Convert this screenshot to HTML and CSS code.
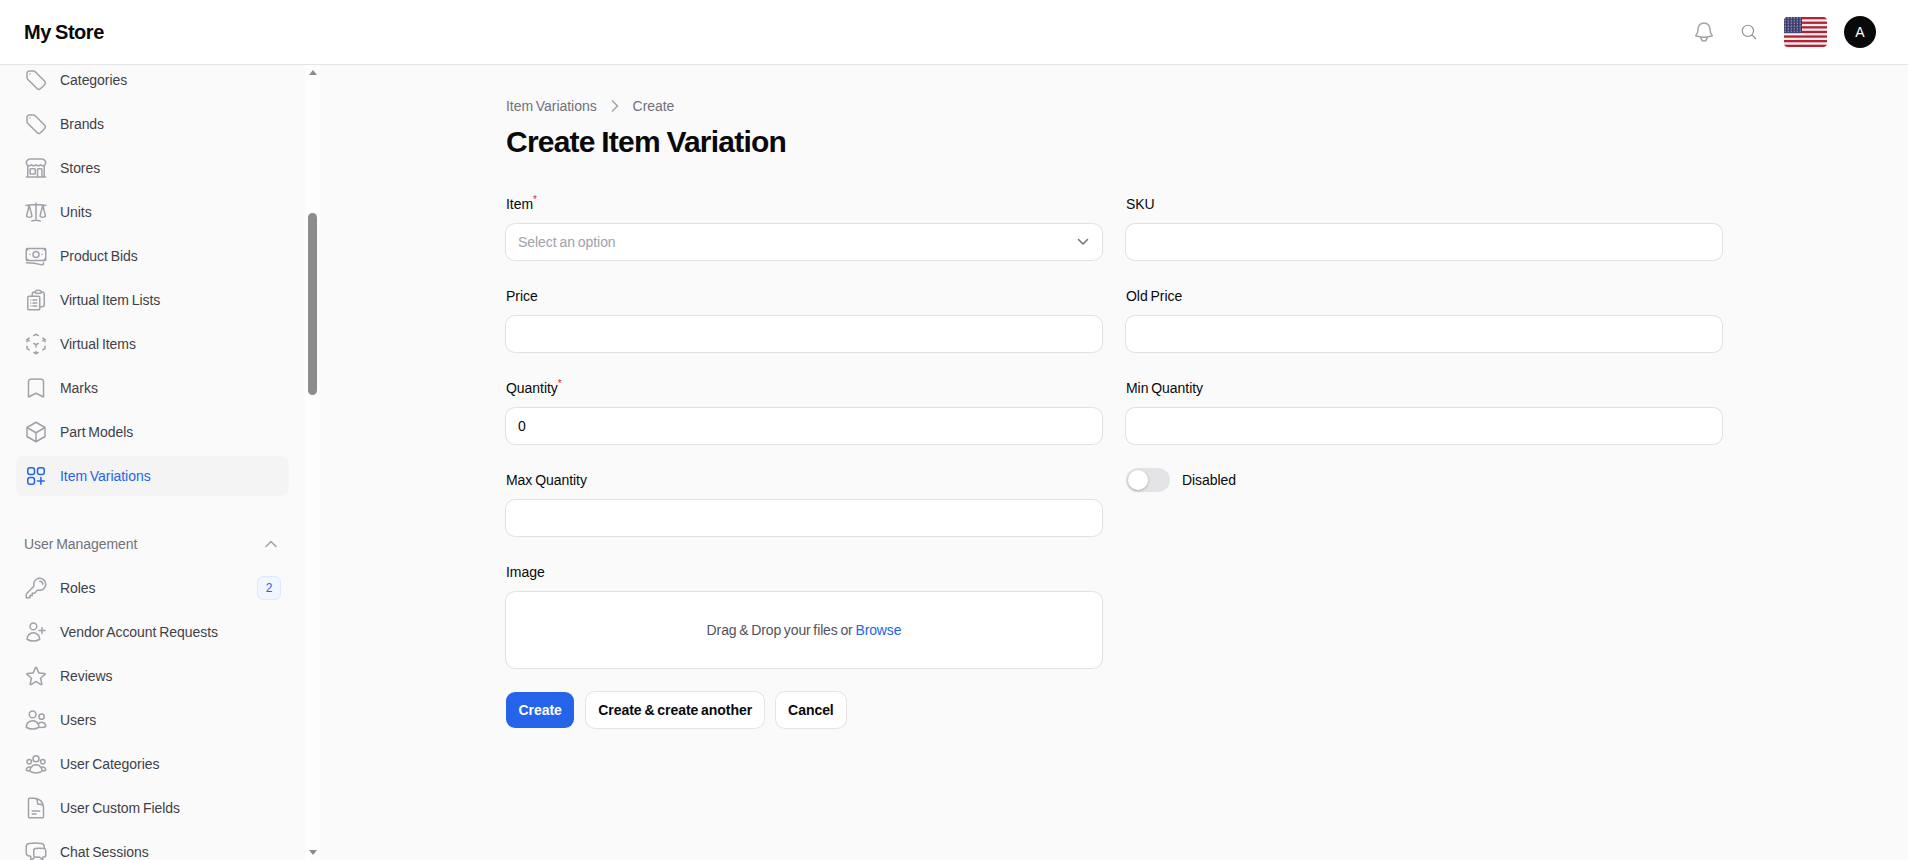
FILE: index.html
```html
<!DOCTYPE html>
<html lang="en">
<head>
<meta charset="utf-8">
<title>Create Item Variation</title>
<link rel="stylesheet" href="styles.css">
</head>
<body>
<svg class="sprite" aria-hidden="true">
<symbol id="i-tag" viewBox="0 0 24 24"><path d="M9.568 3H5.25A2.25 2.25 0 0 0 3 5.25v4.318c0 .597.237 1.17.659 1.591l9.581 9.581c.699.699 1.78.872 2.607.33a18.095 18.095 0 0 0 5.223-5.223c.542-.827.369-1.908-.33-2.607L11.16 3.66A2.25 2.25 0 0 0 9.568 3Z"/><path d="M6 6h.008v.008H6V6Z"/></symbol>
<symbol id="i-store" viewBox="0 0 24 24"><path d="M13.5 21v-7.5a.75.75 0 0 1 .75-.75h3a.75.75 0 0 1 .75.75V21m-4.5 0H2.36m11.14 0H18m0 0h3.64m-1.39 0V9.349M3.75 21V9.349m0 0a3.004 3.004 0 0 0 3.75-.615A2.993 2.993 0 0 0 9.75 9.75c.896 0 1.7-.393 2.25-1.016a2.993 2.993 0 0 0 2.25 1.016c.896 0 1.7-.393 2.25-1.016a3.001 3.001 0 0 0 3.75.614m-16.5 0a3.004 3.004 0 0 1-.621-4.72l1.189-1.19A1.5 1.5 0 0 1 5.378 3h13.243a1.5 1.5 0 0 1 1.06.44l1.19 1.189a3 3 0 0 1-.621 4.72M6.75 18h3.75a.75.75 0 0 0 .75-.75V13.5a.75.75 0 0 0-.75-.75H6.75a.75.75 0 0 0-.75.75v3.75c0 .414.336.75.75.75Z"/></symbol>
<symbol id="i-scale" viewBox="0 0 24 24"><path d="M12 3v17.25m0 0c-1.472 0-2.882.265-4.185.75M12 20.25c1.472 0 2.882.265 4.185.75M18.75 4.97A48.416 48.416 0 0 0 12 4.5c-2.291 0-4.545.16-6.75.47m13.5 0c1.01.143 2.01.317 3 .52m-3-.52 2.62 10.726c.122.499-.106 1.028-.589 1.202a5.988 5.988 0 0 1-2.031.352 5.988 5.988 0 0 1-2.031-.352c-.483-.174-.711-.703-.59-1.202L18.75 4.971Zm-16.5.52c.99-.203 1.99-.377 3-.52m0 0 2.62 10.726c.122.499-.106 1.028-.589 1.202a5.989 5.989 0 0 1-2.031.352 5.989 5.989 0 0 1-2.031-.352c-.483-.174-.711-.703-.59-1.202L5.25 4.971Z"/></symbol>
<symbol id="i-bank" viewBox="0 0 24 24"><path d="M2.25 18.75a60.07 60.07 0 0 1 15.797 2.101c.727.198 1.453-.342 1.453-1.096V18.75M3.75 4.5v.75A.75.75 0 0 1 3 6h-.75m0 0v-.375c0-.621.504-1.125 1.125-1.125H20.25M2.25 6v9m18-10.5v.75c0 .414.336.75.75.75h.75m-1.5-1.5h.375c.621 0 1.125.504 1.125 1.125v9.75c0 .621-.504 1.125-1.125 1.125h-.375m1.5-1.5H21a.75.75 0 0 0-.75.75v.75m0 0H3.75m0 0h-.375a1.125 1.125 0 0 1-1.125-1.125V15m1.5 1.5v-.75A.75.75 0 0 0 3 15h-.75M15 10.5a3 3 0 1 1-6 0 3 3 0 0 1 6 0Zm3 0h.008v.008H18V10.5Zm-12 0h.008v.008H6V10.5Z"/></symbol>
<symbol id="i-clip" viewBox="0 0 24 24"><path d="M9 12h3.75M9 15h3.75M9 18h3.75m3 .75H18a2.25 2.25 0 0 0 2.25-2.25V6.108c0-1.135-.845-2.098-1.976-2.192a48.424 48.424 0 0 0-1.123-.08m-5.801 0c-.065.21-.1.433-.1.664 0 .414.336.75.75.75h4.5a.75.75 0 0 0 .75-.75 2.25 2.25 0 0 0-.1-.664m-5.8 0A2.251 2.251 0 0 1 13.5 2.25H15c1.012 0 1.867.668 2.15 1.586m-5.8 0c-.376.023-.75.05-1.124.08C9.095 4.01 8.25 4.973 8.25 6.108V8.25m0 0H4.875c-.621 0-1.125.504-1.125 1.125v11.25c0 .621.504 1.125 1.125 1.125h9.75c.621 0 1.125-.504 1.125-1.125V9.375c0-.621-.504-1.125-1.125-1.125H8.25ZM6.75 12h.008v.008H6.75V12Zm0 3h.008v.008H6.75V15Zm0 3h.008v.008H6.75V18Z"/></symbol>
<symbol id="i-cubet" viewBox="0 0 24 24"><path d="m21 7.5-2.25-1.313M21 7.5v2.25m0-2.25-2.25 1.313M3 7.5l2.25-1.313M3 7.5l2.25 1.313M3 7.5v2.25m9 3 2.25-1.313M12 12.75l-2.25-1.313M12 12.75V15m0 6.75 2.25-1.313M12 21.75V19.5m0 2.25-2.25-1.313m0-16.875L12 2.25l2.25 1.313M21 14.25v2.25l-2.25 1.313m-13.5 0L3 16.5v-2.25"/></symbol>
<symbol id="i-mark" viewBox="0 0 24 24"><path d="M17.593 3.322c1.1.128 1.907 1.077 1.907 2.185V21L12 17.25 4.5 21V5.507c0-1.108.806-2.057 1.907-2.185a48.507 48.507 0 0 1 11.186 0Z"/></symbol>
<symbol id="i-cube" viewBox="0 0 24 24"><path d="m21 7.5-9-5.25L3 7.5m18 0-9 5.25m9-5.25v9l-9 5.25M3 7.5l9 5.25M3 7.5v9l9 5.25m0-9v9"/></symbol>
<symbol id="i-squares" viewBox="0 0 24 24"><path d="M13.5 16.875h3.375m0 0h3.375m-3.375 0V13.5m0 3.375v3.375M6 10.5h2.25a2.25 2.25 0 0 0 2.25-2.25V6a2.25 2.25 0 0 0-2.25-2.25H6A2.25 2.25 0 0 0 3.75 6v2.25A2.25 2.25 0 0 0 6 10.5Zm0 9.75h2.25A2.25 2.25 0 0 0 10.5 18v-2.25a2.25 2.25 0 0 0-2.25-2.25H6a2.25 2.25 0 0 0-2.25 2.25V18A2.25 2.25 0 0 0 6 20.25Zm9.75-9.75H18a2.25 2.25 0 0 0 2.25-2.25V6A2.25 2.25 0 0 0 18 3.75h-2.25A2.25 2.25 0 0 0 13.5 6v2.25a2.25 2.25 0 0 0 2.25 2.25Z"/></symbol>
<symbol id="i-key" viewBox="0 0 24 24"><path d="M15.75 5.25a3 3 0 0 1 3 3m3 0a6 6 0 0 1-7.029 5.912c-.563-.097-1.159.026-1.563.43L10.5 17.25H8.25v2.25H6v2.25H2.25v-2.818c0-.597.237-1.17.659-1.591l6.499-6.499c.404-.404.527-1 .43-1.563A6 6 0 1 1 21.75 8.25Z"/></symbol>
<symbol id="i-uplus" viewBox="0 0 24 24"><path d="M18 7.5v3m0 0v3m0-3h3m-3 0h-3m-2.25-4.125a3.375 3.375 0 1 1-6.75 0 3.375 3.375 0 0 1 6.75 0ZM3 19.235v-.11a6.375 6.375 0 0 1 12.75 0v.109A12.318 12.318 0 0 1 9.374 21c-2.331 0-4.512-.645-6.374-1.766Z"/></symbol>
<symbol id="i-star" viewBox="0 0 24 24"><path d="M11.48 3.499a.562.562 0 0 1 1.04 0l2.125 5.111a.563.563 0 0 0 .475.345l5.518.442c.499.04.701.663.321.988l-4.204 3.602a.563.563 0 0 0-.182.557l1.285 5.385a.562.562 0 0 1-.84.61l-4.725-2.885a.562.562 0 0 0-.586 0L6.982 20.54a.562.562 0 0 1-.84-.61l1.285-5.386a.562.562 0 0 0-.182-.557l-4.204-3.602a.562.562 0 0 1 .321-.988l5.518-.442a.563.563 0 0 0 .475-.345L11.48 3.5Z"/></symbol>
<symbol id="i-users" viewBox="0 0 24 24"><path d="M15 19.128a9.38 9.38 0 0 0 2.625.372 9.337 9.337 0 0 0 4.121-.952 4.125 4.125 0 0 0-7.533-2.493M15 19.128v-.003c0-1.113-.285-2.16-.786-3.07M15 19.128v.106A12.318 12.318 0 0 1 8.624 21c-2.331 0-4.512-.645-6.374-1.766l-.001-.109a6.375 6.375 0 0 1 11.964-3.07M12 6.375a3.375 3.375 0 1 1-6.75 0 3.375 3.375 0 0 1 6.75 0Zm8.25 2.25a2.625 2.625 0 1 1-5.25 0 2.625 2.625 0 0 1 5.25 0Z"/></symbol>
<symbol id="i-group" viewBox="0 0 24 24"><path d="M18 18.72a9.094 9.094 0 0 0 3.741-.479 3 3 0 0 0-4.682-2.72m.94 3.198.001.031c0 .225-.012.447-.037.666A11.944 11.944 0 0 1 12 21c-2.17 0-4.207-.576-5.963-1.584A6.062 6.062 0 0 1 6 18.719m12 0a5.971 5.971 0 0 0-.941-3.197m0 0A5.995 5.995 0 0 0 12 12.75a5.995 5.995 0 0 0-5.058 2.772m0 0a3 3 0 0 0-4.681 2.72 8.986 8.986 0 0 0 3.74.477m.94-3.197a5.971 5.971 0 0 0-.94 3.197M15 6.75a3 3 0 1 1-6 0 3 3 0 0 1 6 0Zm6 3a2.25 2.25 0 1 1-4.5 0 2.25 2.25 0 0 1 4.5 0Zm-13.5 0a2.25 2.25 0 1 1-4.5 0 2.25 2.25 0 0 1 4.5 0Z"/></symbol>
<symbol id="i-doc" viewBox="0 0 24 24"><path d="M19.5 14.25v-2.625a3.375 3.375 0 0 0-3.375-3.375h-1.5A1.125 1.125 0 0 1 13.5 7.125v-1.5a3.375 3.375 0 0 0-3.375-3.375H8.25m0 12.75h7.5m-7.5 3H12M10.5 2.25H5.625c-.621 0-1.125.504-1.125 1.125v17.25c0 .621.504 1.125 1.125 1.125h12.75c.621 0 1.125-.504 1.125-1.125V11.25a9 9 0 0 0-9-9Z"/></symbol>
<symbol id="i-chat" viewBox="0 0 24 24"><path d="M20.25 8.511c.884.284 1.5 1.128 1.5 2.097v4.286c0 1.136-.847 2.1-1.98 2.193-.34.027-.68.052-1.02.072v3.091l-3-3c-1.354 0-2.694-.055-4.02-.163a2.115 2.115 0 0 1-.825-.242m9.345-8.334a2.126 2.126 0 0 0-.476-.095 48.64 48.64 0 0 0-8.048 0c-1.131.094-1.976 1.057-1.976 2.192v4.286c0 .837.46 1.58 1.155 1.951m9.345-8.334V6.637c0-1.621-1.152-3.026-2.76-3.235A48.455 48.455 0 0 0 11.25 3c-2.115 0-4.198.137-6.24.402-1.608.209-2.76 1.614-2.76 3.235v6.226c0 1.621 1.152 3.026 2.76 3.235.577.075 1.157.14 1.74.194V21l4.155-4.155"/></symbol>
</svg>

<header class="topbar">
  <div class="brand">My Store</div>
  <div class="topbar-actions">
    <svg class="top-bell" viewBox="0 0 24 24"><path d="M14.857 17.082a23.848 23.848 0 0 0 5.454-1.31A8.967 8.967 0 0 1 18 9.75V9A6 6 0 0 0 6 9v.75a8.967 8.967 0 0 1-2.312 6.022c1.733.64 3.56 1.085 5.455 1.31m5.714 0a24.255 24.255 0 0 1-5.714 0m5.714 0a3 3 0 1 1-5.714 0"/></svg>
    <svg class="top-search" viewBox="0 0 24 24"><path d="m21 21-5.197-5.197m0 0A7.5 7.5 0 1 0 5.196 5.196a7.5 7.5 0 0 0 10.607 10.607Z"/></svg>
    <svg class="flag" viewBox="0 0 43 30">
      <defs>
        <clipPath id="flag-clip"><rect width="43" height="30" rx="4"/></clipPath>
        <pattern id="stars" width="3" height="2.7" patternUnits="userSpaceOnUse"><circle cx="1.2" cy="1" r=".65" fill="#e8e8f2"/></pattern>
      </defs>
      <g clip-path="url(#flag-clip)">
        <rect width="43" height="30" fill="#f4eeee"/>
        <g fill="#b22234">
          <rect y="0" width="43" height="2.3"/><rect y="4.6" width="43" height="2.3"/><rect y="9.2" width="43" height="2.3"/><rect y="13.8" width="43" height="2.3"/><rect y="18.4" width="43" height="2.3"/><rect y="23" width="43" height="2.3"/><rect y="27.7" width="43" height="2.3"/>
        </g>
        <rect width="18" height="16.1" fill="#3c3b6e"/>
        <rect width="18" height="16.1" fill="url(#stars)"/>
      </g>
    </svg>
    <div class="avatar">A</div>
  </div>
</header>

<div class="shell">
  <aside class="sidebar">
    <nav class="nav">
      <a class="nav-item"><svg class="nav-icon"><use href="#i-tag"/></svg>Categories</a>
      <a class="nav-item"><svg class="nav-icon"><use href="#i-tag"/></svg>Brands</a>
      <a class="nav-item"><svg class="nav-icon"><use href="#i-store"/></svg>Stores</a>
      <a class="nav-item"><svg class="nav-icon"><use href="#i-scale"/></svg>Units</a>
      <a class="nav-item"><svg class="nav-icon"><use href="#i-bank"/></svg>Product Bids</a>
      <a class="nav-item"><svg class="nav-icon"><use href="#i-clip"/></svg>Virtual Item Lists</a>
      <a class="nav-item"><svg class="nav-icon"><use href="#i-cubet"/></svg>Virtual Items</a>
      <a class="nav-item"><svg class="nav-icon"><use href="#i-mark"/></svg>Marks</a>
      <a class="nav-item"><svg class="nav-icon"><use href="#i-cube"/></svg>Part Models</a>
      <a class="nav-item is-active"><svg class="nav-icon"><use href="#i-squares"/></svg>Item Variations</a>
      <div class="nav-group">
        <span>User Management</span>
        <svg class="group-chevron" viewBox="0 0 20 20"><path d="M5 12.5 10 7.5l5 5"/></svg>
      </div>
      <a class="nav-item"><svg class="nav-icon"><use href="#i-key"/></svg>Roles<span class="badge">2</span></a>
      <a class="nav-item"><svg class="nav-icon"><use href="#i-uplus"/></svg>Vendor Account Requests</a>
      <a class="nav-item"><svg class="nav-icon"><use href="#i-star"/></svg>Reviews</a>
      <a class="nav-item"><svg class="nav-icon"><use href="#i-users"/></svg>Users</a>
      <a class="nav-item"><svg class="nav-icon"><use href="#i-group"/></svg>User Categories</a>
      <a class="nav-item"><svg class="nav-icon"><use href="#i-doc"/></svg>User Custom Fields</a>
      <a class="nav-item"><svg class="nav-icon"><use href="#i-chat"/></svg>Chat Sessions</a>
    </nav>
    <div class="scrollbar">
      <span class="arrow arrow-up"></span>
      <div class="track"><span class="thumb"></span></div>
      <span class="arrow arrow-down"></span>
    </div>
  </aside>

  <main class="main">
    <div class="page">
      <div class="crumbs">
        <span>Item Variations</span>
        <svg class="crumb-sep" viewBox="0 0 20 20"><path d="m7.5 5 5 5-5 5"/></svg>
        <span>Create</span>
      </div>
      <h1 class="title">Create Item Variation</h1>
      <form class="form-grid">
        <div class="field">
          <label class="label">Item<sup class="req">*</sup></label>
          <div class="input select"><span class="placeholder">Select an option</span>
            <svg class="select-chevron" viewBox="0 0 20 20"><path d="m5.5 7.5 4.5 4.5 4.5-4.5"/></svg>
          </div>
        </div>
        <div class="field"><label class="label">SKU</label><div class="input"></div></div>
        <div class="field"><label class="label">Price</label><div class="input"></div></div>
        <div class="field"><label class="label">Old Price</label><div class="input"></div></div>
        <div class="field"><label class="label">Quantity<sup class="req">*</sup></label><div class="input">0</div></div>
        <div class="field"><label class="label">Min Quantity</label><div class="input"></div></div>
        <div class="field"><label class="label">Max Quantity</label><div class="input"></div></div>
        <div class="toggle-row"><span class="toggle"><span class="knob"></span></span><span class="toggle-label">Disabled</span></div>
        <div class="field"><label class="label">Image</label>
          <div class="dropzone">Drag &amp; Drop your files or&nbsp;<span class="link">Browse</span></div>
        </div>
      </form>
      <div class="actions">
        <button class="btn btn-primary" type="button">Create</button>
        <button class="btn" type="button">Create &amp; create another</button>
        <button class="btn" type="button">Cancel</button>
      </div>
    </div>
  </main>
</div>
</body>
</html>
```
FILE: styles.css
```css
* { box-sizing: border-box; }
html, body { margin: 0; height: 100%; }
body {
  display: flex;
  flex-direction: column;
  height: 100vh;
  overflow: hidden;
  background: #fafafa;
  color: #09090b;
  font-family: "Liberation Sans", Arial, sans-serif;
  font-size: 14px;
  line-height: 20px;
  word-spacing: -1px;
  letter-spacing: -.05px;
}
.sprite { display: none; }
svg { fill: none; stroke: currentColor; stroke-width: 1.5; stroke-linecap: round; stroke-linejoin: round; flex: none; }

.topbar {
  flex: none;
  height: 65px;
  display: flex;
  align-items: center;
  justify-content: space-between;
  padding: 0 32px 0 24px;
  background: #fff;
  border-bottom: 1px solid #e4e4e7;
}
.brand { font-size: 20px; font-weight: 700; letter-spacing: -.45px; color: #09090b; }
.topbar-actions { display: flex; align-items: center; }
.top-bell { width: 24px; height: 24px; color: #a1a1aa; margin-right: 24px; }
.top-search { width: 18px; height: 18px; color: #8e8e96; margin-right: 26px; }
.flag { width: 43px; height: 30px; stroke: none; margin-right: 17px; }
.avatar {
  width: 32px; height: 32px; border-radius: 50%;
  background: #09090b; color: #fff;
  display: flex; align-items: center; justify-content: center;
}

.shell { flex: 1; min-height: 0; display: flex; }
.sidebar { flex: none; width: 320px; display: flex; overflow: hidden; }
.nav { flex: 1; min-width: 0; padding: 0 16px; margin-top: -5px; display: flex; flex-direction: column; gap: 4px; }
.nav-item {
  flex: none;
  height: 40px;
  display: flex; align-items: center; gap: 12px;
  padding: 0 8px;
  border-radius: 8px;
  color: #3f3f46;
}
.nav-icon { width: 24px; height: 24px; color: #a1a1aa; }
.is-active { background: #f4f4f5; color: #2563eb; }
.is-active .nav-icon { color: #2563eb; }
.nav-group {
  flex: none;
  height: 20px;
  margin: 34px 0 10px;
  display: flex; align-items: center; justify-content: space-between;
  padding: 0 8px;
  color: #71717a;
}
.group-chevron { width: 20px; height: 20px; color: #a1a1aa; }
.badge {
  margin-left: auto;
  width: 24px; height: 24px;
  border: 1px solid #dbeafe; border-radius: 6px;
  background: #eff6ff; color: #2563eb;
  font-size: 12px; line-height: 22px; text-align: center;
}
.scrollbar { flex: none; width: 15px; background: #fdfdfd; display: flex; flex-direction: column; align-items: center; }
.arrow { flex: none; width: 0; height: 0; border-left: 4.5px solid transparent; border-right: 4.5px solid transparent; }
.arrow-up { border-bottom: 5px solid #8c8c8c; margin-top: 5px; }
.arrow-down { border-top: 5px solid #8c8c8c; margin-bottom: 5px; }
.track { flex: 1; width: 100%; display: flex; flex-direction: column; align-items: center; }
.thumb { margin-top: 138px; width: 9px; height: 182px; border-radius: 5px; background: #8c8c8c; }

.main { flex: 1; min-width: 0; padding: 32px 32px; }
.page { max-width: 1216px; margin: 0 auto; }
.crumbs { display: flex; align-items: center; gap: 8px; height: 20px; margin-top: -1px; color: #71717a; }
.crumb-sep { width: 20px; height: 20px; color: #a1a1aa; }
.title { margin: 8px 0 0; font-size: 30px; line-height: 36px; font-weight: 700; letter-spacing: -.78px; color: #09090b; }
.form-grid { margin-top: 34px; display: grid; grid-template-columns: 1fr 1fr; column-gap: 24px; row-gap: 26px; }
.field { display: flex; flex-direction: column; gap: 10px; }
.label { height: 20px; color: #09090b; }
.req { color: #dc2626; font-size: 10px; line-height: 0; }
.input {
  height: 36px;
  display: flex; align-items: center;
  padding: 0 12px;
  background: #fff;
  box-shadow: 0 0 0 1px #e2e2e5;
  border-radius: 9px;
  color: #09090b;
}
.select { justify-content: space-between; padding-right: 9px; }
.placeholder { color: #a1a1aa; }
.select-chevron { width: 20px; height: 20px; color: #71717a; }
.toggle-row { display: flex; align-items: flex-start; gap: 12px; margin-top: -2px; }
.toggle { width: 44px; height: 24px; padding: 2px; border-radius: 12px; background: #e4e4e7; display: block; }
.knob { display: block; width: 20px; height: 20px; border-radius: 50%; background: #fff; box-shadow: 0 1px 3px rgba(0,0,0,.25); }
.toggle-label { line-height: 24px; }
.dropzone {
  height: 76px;
  display: flex; align-items: center; justify-content: center;
  background: #fff;
  box-shadow: 0 0 0 1px #e2e2e5;
  border-radius: 9px;
  color: #52525b;
  letter-spacing: -.12px;
}
.link { color: #2563eb; }
.actions { margin-top: 24px; display: flex; gap: 12px; }
.btn {
  height: 36px;
  padding: 0 12px;
  border: 0;
  border-radius: 9px;
  background: #fff;
  box-shadow: 0 0 0 1px #e4e4e7;
  color: #09090b;
  font: inherit;
  font-weight: 700;
  letter-spacing: -.05px;
  word-spacing: inherit;
}
.btn-primary { background: #2563eb; box-shadow: none; color: #fff; padding: 0 12.5px; }
```
